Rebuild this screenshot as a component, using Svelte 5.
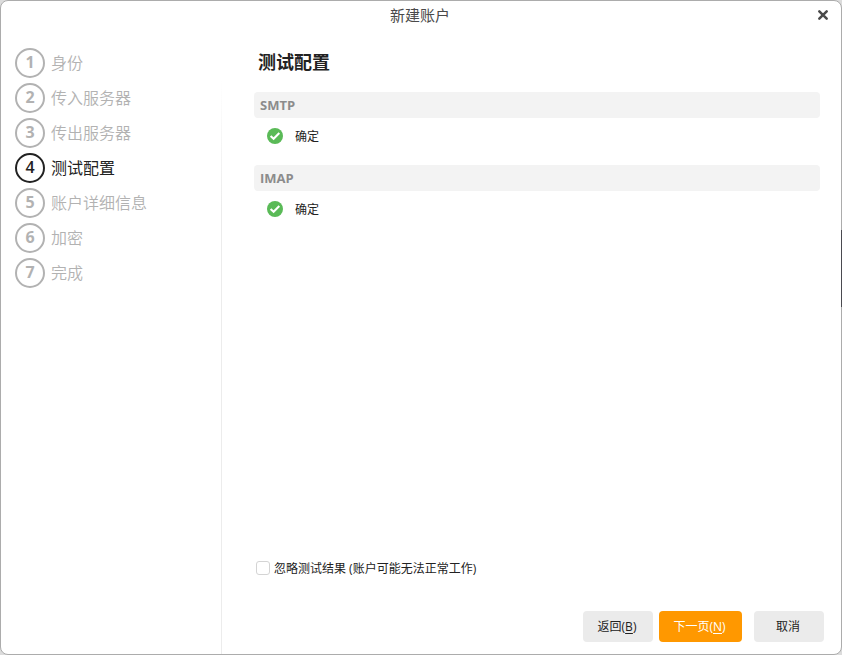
<script>
  const steps = ['身份', '传入服务器', '传出服务器', '测试配置', '账户详细信息', '加密', '完成'];
  const current = 3;
  const tests = [
    { name: 'SMTP', result: '确定' },
    { name: 'IMAP', result: '确定' }
  ];
  let ignore = $state(false);
</script>

<div class="desktop">
  <div class="window">
    <header>
      <span class="title">新建账户</span>
      <button class="close" aria-label="关闭">
        <svg width="12" height="12" viewBox="0 0 12 12"><path d="M2.3 2.3L9.7 9.7M9.7 2.3L2.3 9.7" stroke="#4a4a4a" stroke-width="2.5" stroke-linecap="round" /></svg>
      </button>
    </header>
    <div class="body">
      <ol class="steps">
        {#each steps as step, i}
          <li class:active={i === current}>
            <span class="num">{i + 1}</span>
            <span class="label">{step}</span>
          </li>
        {/each}
      </ol>
      <div class="divider"></div>
      <main>
        <h1>测试配置</h1>
        {#each tests as test}
          <section>
            <h2>{test.name}</h2>
            <div class="result">
              <svg width="16" height="16" viewBox="0 0 16 16">
                <circle cx="8" cy="8" r="8" fill="#5aba57" />
                <path d="M3.6 7.9L6.6 10.7L12.3 5" fill="none" stroke="#fff" stroke-width="2.1" />
              </svg>
              <span>{test.result}</span>
            </div>
          </section>
        {/each}
        <label class="ignore">
          <input type="checkbox" bind:checked={ignore} />
          <span>忽略测试结果 (账户可能无法正常工作)</span>
        </label>
        <footer>
          <button>返回(<u>B</u>)</button>
          <button class="primary">下一页(<u>N</u>)</button>
          <button class="cancel">取消</button>
        </footer>
      </main>
    </div>
  </div>
  <div class="edge"></div>
</div>

<style>
  :global(body) {
    margin: 0;
  }
  .desktop {
    position: relative;
    height: 100vh;
    background: #dcdcdc;
    font-family: "Open Sans", "Noto Sans CJK SC", sans-serif;
    font-size: 12px;
    color: #222;
  }
  .window {
    box-sizing: border-box;
    height: 100%;
    display: flex;
    flex-direction: column;
    background: #fff;
    border: 1px solid #acacac;
    border-radius: 8px;
    overflow: hidden;
  }
  .edge {
    position: absolute;
    right: 0;
    top: 230px;
    width: 1px;
    height: 77px;
    background: #4a4a50;
  }
  header {
    display: grid;
    grid-template-columns: 30px 1fr 32px;
    align-items: center;
    height: 28px;
    flex: none;
  }
  .title {
    grid-column: 2;
    text-align: center;
    font-size: 15px;
    line-height: 20px;
    color: #4a4a4a;
  }
  button {
    border: 0;
    font: inherit;
    color: inherit;
  }
  .close {
    display: flex;
    padding: 0;
    width: 12px;
    height: 12px;
    margin-left: 8px;
    background: none;
  }
  .body {
    flex: 1;
    display: flex;
    min-height: 0;
  }
  .steps {
    list-style: none;
    box-sizing: border-box;
    width: 220px;
    flex: none;
    margin: 0;
    padding: 19px 0 0 14px;
    display: flex;
    flex-direction: column;
    gap: 5px;
    color: #b2b2b2;
    font-size: 16px;
  }
  li {
    display: flex;
    align-items: center;
    gap: 6px;
    height: 30px;
  }
  .num {
    box-sizing: border-box;
    width: 30px;
    height: 30px;
    border: 2px solid currentColor;
    border-radius: 50%;
    text-align: center;
    line-height: 24px;
    font-weight: 700;
  }
  .label {
    line-height: 24px;
    font-weight: 350;
  }
  .active {
    color: #222;
  }
  .active .num {
    font-weight: 600;
  }
  .active .label {
    font-weight: 400;
  }
  .divider {
    width: 1px;
    background: linear-gradient(#fff, #fff 50px, #ececec 180px);
  }
  main {
    flex: 1;
    min-width: 0;
    display: flex;
    flex-direction: column;
    padding: 20px 17px 12px 32px;
  }
  h1 {
    margin: 0 0 17px 4px;
    font-size: 18px;
    line-height: 26px;
    font-weight: 700;
  }
  section {
    margin-right: 4px;
    margin-bottom: 20px;
  }
  h2 {
    margin: 0;
    height: 26px;
    padding-left: 6px;
    border-radius: 4px;
    background: #f3f3f3;
    color: #8c8c8c;
    font-size: 13px;
    line-height: 26px;
    font-weight: 700;
  }
  .result {
    display: flex;
    align-items: center;
    gap: 12px;
    height: 16px;
    padding: 10px 0 1px 13px;
  }
  .result span {
    line-height: 18px;
    padding-top: 2px;
  }
  .ignore {
    display: flex;
    align-items: center;
    gap: 4px;
    height: 18px;
    margin: auto 0 34px 2px;
  }
  input {
    appearance: none;
    width: 14px;
    height: 14px;
    margin: 0;
    border: 1px solid #d4d4d4;
    border-radius: 3px;
    background: #fff;
  }
  input:checked {
    background: #ff9800;
  }
  footer {
    display: flex;
    justify-content: flex-end;
    gap: 6px;
  }
  footer button {
    width: 70px;
    height: 31px;
    padding: 0 2px 2px 0;
    border-radius: 4px;
    background: #ebebeb;
  }
  footer .primary {
    width: 83px;
    background: #ff9800;
    color: #fff;
  }
  footer .cancel {
    margin-left: 6px;
  }
  u {
    text-underline-offset: 2px;
  }
</style>
